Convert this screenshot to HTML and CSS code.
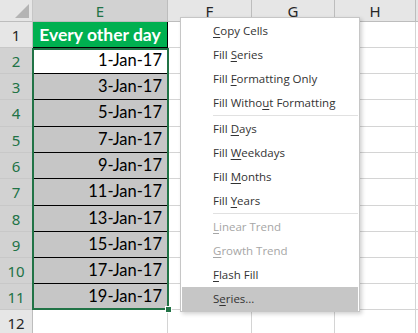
FILE: index.html
```html
<!DOCTYPE html>
<html lang="en">
<head>
    <meta charset="UTF-8">
    <meta name="viewport" content="width=device-width, initial-scale=1.0">
    <title>Every other day - Fill options</title>
    <link rel="stylesheet" href="styles.css">
</head>
<body>
    <div class="sheet">
        <div class="grid">
            <!-- column headers -->
            <div class="corner"><span class="tri"></span></div>
            <div class="colhead sel">E</div>
            <div class="colhead">F</div>
            <div class="colhead">G</div>
            <div class="colhead">H</div>
            <div class="colhead end"></div>

            <!-- row 1 -->
            <div class="rowhead">1</div>
            <div class="cell title">Every other day</div>
            <div class="cell"></div><div class="cell"></div><div class="cell"></div><div class="cell end"></div>

            <div class="rowhead sel">2</div>
            <div class="cell date first">1-Jan-17</div>
            <div class="cell"></div><div class="cell"></div><div class="cell"></div><div class="cell end"></div>

            <div class="rowhead sel">3</div>
            <div class="cell date">3-Jan-17</div>
            <div class="cell"></div><div class="cell"></div><div class="cell"></div><div class="cell end"></div>

            <div class="rowhead sel">4</div>
            <div class="cell date">5-Jan-17</div>
            <div class="cell"></div><div class="cell"></div><div class="cell"></div><div class="cell end"></div>

            <div class="rowhead sel">5</div>
            <div class="cell date">7-Jan-17</div>
            <div class="cell"></div><div class="cell"></div><div class="cell"></div><div class="cell end"></div>

            <div class="rowhead sel">6</div>
            <div class="cell date">9-Jan-17</div>
            <div class="cell"></div><div class="cell"></div><div class="cell"></div><div class="cell end"></div>

            <div class="rowhead sel">7</div>
            <div class="cell date">11-Jan-17</div>
            <div class="cell"></div><div class="cell"></div><div class="cell"></div><div class="cell end"></div>

            <div class="rowhead sel">8</div>
            <div class="cell date">13-Jan-17</div>
            <div class="cell"></div><div class="cell"></div><div class="cell"></div><div class="cell end"></div>

            <div class="rowhead sel">9</div>
            <div class="cell date">15-Jan-17</div>
            <div class="cell"></div><div class="cell"></div><div class="cell"></div><div class="cell end"></div>

            <div class="rowhead sel">10</div>
            <div class="cell date">17-Jan-17</div>
            <div class="cell"></div><div class="cell"></div><div class="cell"></div><div class="cell end"></div>

            <div class="rowhead sel">11</div>
            <div class="cell date">19-Jan-17</div>
            <div class="cell"></div><div class="cell"></div><div class="cell"></div><div class="cell end"></div>

            <div class="rowhead">12</div>
            <div class="cell"></div>
            <div class="cell"></div><div class="cell"></div><div class="cell"></div><div class="cell end"></div>
        </div>

        <!-- selected range E2:E11 -->
        <div class="selection"><span class="handle"></span></div>

        <!-- right-drag fill menu -->
        <ul class="menu">
            <li><u>C</u>opy Cells</li>
            <li>Fill <u>S</u>eries</li>
            <li>Fill <u>F</u>ormatting Only</li>
            <li>Fill Witho<u>u</u>t Formatting</li>
            <li class="sep"></li>
            <li>Fill <u>D</u>ays</li>
            <li>Fill <u>W</u>eekdays</li>
            <li>Fill <u>M</u>onths</li>
            <li>Fill <u>Y</u>ears</li>
            <li class="sep"></li>
            <li class="off"><u>L</u>inear Trend</li>
            <li class="off"><u>G</u>rowth Trend</li>
            <li><u>F</u>lash Fill</li>
            <li class="hover">S<u>e</u>ries...</li>
        </ul>
    </div>
</body>
</html>
```

FILE: styles.css
```css
/* Excel-like sheet */
body {
    margin: 0;
    padding: 0;
    background: #fff;
    font-family: Lato, "Liberation Sans", sans-serif;
    overflow: hidden;
}

.sheet {
    position: relative;
    width: 418px;
    height: 333px;
}

.grid {
    display: grid;
    grid-template-columns: 33px 135px 84px 83px 81px 2px;
    grid-template-rows: 22px 26px 26px 26px 27px 26px 26px 27px 26px 26px 26px 26px 30px;
}

.grid > div {
    box-sizing: border-box;
    border-right: 1px solid #d4d4d4;
    border-bottom: 1px solid #d4d4d4;
}

.grid > .end {
    border-right: none;
}

.corner {
    background: #e6e6e6;
    position: relative;
    border-right-color: #c6c6c6 !important;
    border-bottom-color: #bdbdbd !important;
}

.tri {
    position: absolute;
    right: 3px;
    bottom: 3px;
    width: 0;
    height: 0;
    border-left: 14px solid transparent;
    border-bottom: 14px solid #b4b4b4;
}

.colhead {
    background: #e6e6e6;
    color: #262626;
    font-family: "Noto Sans", sans-serif;
    font-size: 15px;
    line-height: 22px;
    text-align: center;
    border-right-color: #bdbdbd !important;
    border-bottom-color: #bdbdbd !important;
}

.colhead.sel {
    background: #d2d2d2;
    color: #217346;
}

.rowhead {
    background: #e6e6e6;
    color: #262626;
    font-family: "Noto Sans", sans-serif;
    font-size: 15px;
    text-align: center;
    line-height: 26px;
    border-right-color: #bdbdbd !important;
    border-bottom-color: #c8c8c8 !important;
}

.rowhead.sel {
    background: #d2d2d2;
    color: #217346;
}

.cell {
    font-size: 16.5px;
    line-height: 25px;
    padding: 0 5px;
    white-space: nowrap;
}

.title {
    background: #00b050;
    color: #fff;
    font-size: 17.5px;
    font-weight: bold;
    text-align: center;
    padding: 0;
    border-right: 1px solid #000 !important;
    border-bottom-color: #000 !important;
}

.date {
    background: #c6c6c6;
    color: #000;
    text-align: right;
    border-right-color: #000 !important;
    border-bottom-color: #000 !important;
}

.date.first {
    background: #fff;
}

.selection {
    position: absolute;
    left: 32px;
    top: 48px;
    width: 133px;
    height: 258px;
    border: 2px solid #217346;
}

.handle {
    position: absolute;
    right: -5px;
    bottom: -5px;
    width: 5px;
    height: 5px;
    background: #217346;
    border: 1px solid #fff;
}

.menu {
    position: absolute;
    left: 180px;
    top: 17px;
    width: 178px;
    margin: 0;
    padding: 1px 0 0 0;
    list-style: none;
    background: #fff;
    border: 1px solid #c6c6c6;
    box-shadow: 2px 2px 4px rgba(0, 0, 0, 0.18);
    font-family: "Open Sans", "Noto Sans", sans-serif;
    font-size: 11.5px;
    color: #333;
}

.menu li {
    height: 24px;
    line-height: 24px;
    padding-left: 31px;
    margin: 0 1px;
}

.menu li.sep {
    height: 2px;
    padding: 0;
    margin-left: 32px;
    position: relative;
}

.menu li.sep::after {
    content: "";
    position: absolute;
    left: 0;
    right: 0;
    top: 0;
    border-top: 1px solid #e1e1e1;
}

.menu li.off {
    color: #a6a6a6;
}

.menu li.hover {
    background: #c6c6c6;
}

.menu u {
    text-underline-offset: 2px;
}
```
